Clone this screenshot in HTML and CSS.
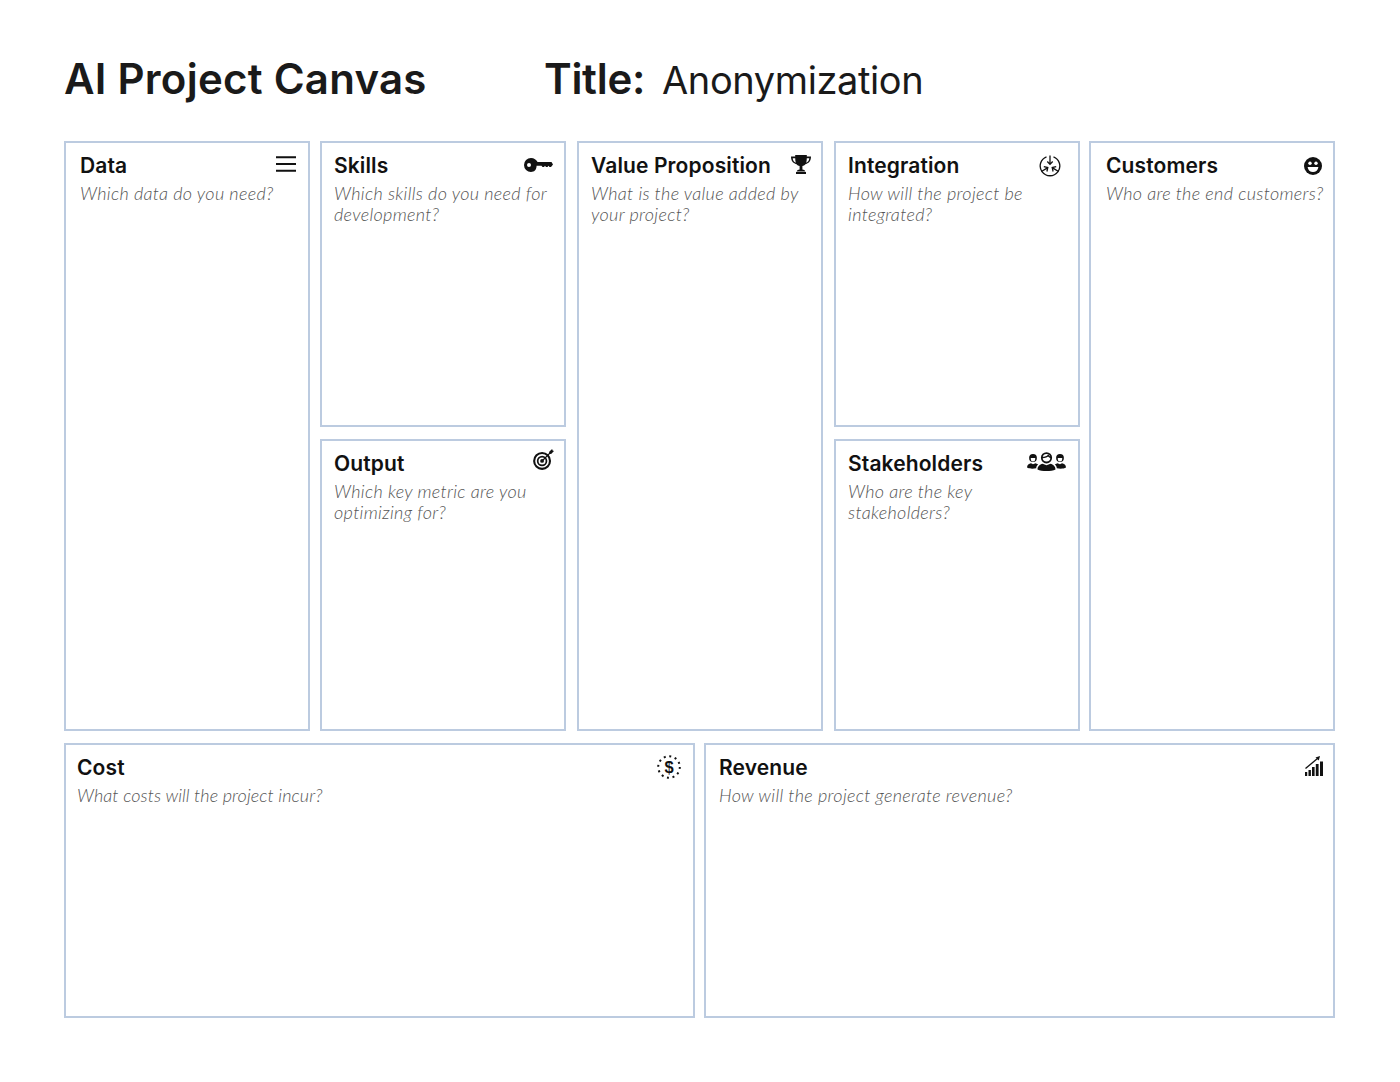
FILE: index.html
```html
<!DOCTYPE html>
<html lang="en">
<head>
<meta charset="utf-8">
<title>AI Project Canvas</title>
<link rel="stylesheet" href="styles.css">
</head>
<body>
<main class="page">
  <header class="header">
    <h1 class="brand">AI Project Canvas</h1>
    <div class="doc-title"><strong>Title:</strong><span>Anonymization</span></div>
  </header>
  <section class="upper">
    <article class="card col-1 pad-15">
      <div class="card-head menu-head"><h2>Data</h2>
        <svg class="icon icon-menu" viewBox="0 0 20 16"><path d="M0 1.200h20M0 8h20M0 14.800h20" stroke="#111" stroke-width="2" fill="none"/></svg>
      </div>
      <p>Which data do you need?</p>
    </article>
    <div class="stack col-2">
      <article class="card skills pad-13">
        <div class="card-head key-head"><h2>Skills</h2>
          <svg class="icon icon-key" viewBox="0 0 29 14"><path fill="#111" fill-rule="evenodd" d="M7 0c3 0 5.500 1.700 6.600 4H27.500L29 6.500l-2 2.500h-1.500l-1-1.200-1 1.200h-1.500l-1-1.200-1 1.200h-1.500l-1-1.200h-4.900C12.500 12.300 10 14 7 14A7 7 0 0 1 7 0zM5 5a2 2 0 1 0 0 4 2 2 0 0 0 0-4z"/></svg>
        </div>
        <p>Which skills do you need for development?</p>
      </article>
      <article class="card output pad-13">
        <div class="card-head"><h2>Output</h2>
          <svg class="icon icon-target" viewBox="0 0 22 22"><g fill="none" stroke="#111"><circle cx="9.500" cy="12.500" r="8.300" stroke-width="2.200"/><circle cx="9.500" cy="12.500" r="4.600" stroke-width="1.800"/></g><circle cx="9.500" cy="12.500" r="2" fill="#111"/><path d="M9.500 12.500 19 3" stroke="#111" stroke-width="1.400"/><path d="M17 3l3-3 .6 1.600L22 2.200l-3 3-2.200-.2z" fill="#111"/></svg>
        </div>
        <p>Which key metric are you optimizing for?</p>
      </article>
    </div>
    <article class="card col-3 pad-13">
      <div class="card-head"><h2>Value Proposition</h2>
        <svg class="icon icon-trophy" viewBox="0 0 20 19"><path fill="#111" d="M4.200 0h11.600v1.600H20c0 4.200-1.700 6.700-5.600 7.600-.9 1-1.800 1.500-3 1.800v3.400c1.300.1 2.600.7 3 2.200H5.600c.4-1.500 1.700-2.100 3-2.200V11c-1.200-.3-2.100-.8-3-1.800C1.700 8.300 0 5.800 0 1.600h4.200zM1.700 3.200c.2 2.300 1.100 3.800 3.100 4.500-.4-1.400-.6-2.900-.6-4.500zm16.600 0h-2.500c0 1.600-.2 3.100-.6 4.500 2-.7 2.900-2.200 3.100-4.500zM5 17h10v2H5z"/></svg>
      </div>
      <p>What is the value added by your project?</p>
    </article>
    <div class="stack col-4">
      <article class="card skills pad-14">
        <div class="card-head integration-head"><h2>Integration</h2>
          <svg class="icon icon-integration" viewBox="0 0 22 22"><g fill="none" stroke="#111" stroke-width="1.300"><path d="M7.500 1.800a9.800 9.800 0 1 0 7 0"/><path d="M11 .5v8.500M8.300 6.500 11 9.400l2.700-2.900"/><path d="M2.500 16.500 8.800 12.600M4.800 11.700l4 .9-.9 3.900"/><path d="M19.500 16.500l-6.300-3.900M17.200 11.700l-4 .9.900 3.900"/></g></svg>
        </div>
        <p>How will the project be integrated?</p>
      </article>
      <article class="card output pad-14">
        <div class="card-head people-head"><h2>Stakeholders</h2>
          <svg class="icon icon-people" viewBox="0 0 39 19"><g fill="#111"><circle cx="6" cy="6" r="3.900"/><path d="M0 15.500c0-2.600 2-3.900 4-4.300l2 1 2.600-1 2.600 1.300c-1.300 1-2 2.300-2 3.800-3.500.6-7 .5-9.200-.8z"/><circle cx="33" cy="6" r="3.900"/><path d="M39 15.500c0-2.600-2-3.900-4-4.300l-2 1-2.600-1-2.600 1.300c1.300 1 2 2.300 2 3.800 3.500.6 7 .5 9.200-.8z"/><path d="M10.500 17.500c0-3.300 2.400-5 5-5.800l4 1.500 4-1.500c2.600.8 5 2.500 5 5.800-2 1.100-5.500 1.500-9 1.500s-7-.4-9-1.500z"/></g><circle cx="19.500" cy="5.800" r="4.700" fill="#fff" stroke="#111" stroke-width="1.800"/><path d="M15 5.500c1.500-.1 5-.4 6.200-2.200.7 1.200 2 2 3 2.200" stroke="#111" stroke-width="1.300" fill="none"/><g fill="#fff"><path d="M3.800 6h4.400v1.200a2.200 2.200 0 0 1-4.400 0zM30.800 6h4.400v1.200a2.200 2.200 0 0 1-4.400 0z"/></g></svg>
        </div>
        <p>Who are the key stakeholders?</p>
      </article>
    </div>
    <article class="card col-5 pad-16">
      <div class="card-head smile-head"><h2>Customers</h2>
        <svg class="icon icon-smile" viewBox="0 0 18 18"><circle cx="9" cy="9" r="9" fill="#111"/><circle cx="6" cy="6.300" r="1.700" fill="#fff"/><circle cx="12" cy="6.300" r="1.700" fill="#fff"/><path d="M3.600 10h10.800c-.3 3-2.500 5-5.400 5s-5.100-2-5.400-5z" fill="#fff"/></svg>
      </div>
      <p class="wide">Who are the end customers?</p>
    </article>
  </section>
  <section class="lower">
    <article class="card cost">
      <div class="card-head cost-head"><h2>Cost</h2>
        <svg class="icon icon-cost" viewBox="0 0 24 24"><circle cx="12" cy="12" r="10.800" fill="none" stroke="#111" stroke-width="2" stroke-dasharray="2 3.650"/><text x="12" y="18" class="dollar">$</text></svg>
      </div>
      <p class="snug">What costs will the project incur?</p>
    </article>
    <article class="card revenue">
      <div class="card-head"><h2>Revenue</h2>
        <svg class="icon icon-revenue" viewBox="0 0 18 20"><path fill="#111" d="M0 16h2.200v4H0zM3.500 14h2.400v6H3.500zM7 11h2.600v9H7zM10.800 8h2.800v12h-2.800zM15 5.500h3V20h-3z"/><path d="M.5 12.500 12.500 2.500" stroke="#111" stroke-width="1.300"/><path d="M10.500 1.500 15 0l-1.200 4.500z" fill="#111"/></svg>
      </div>
      <p>How will the project generate revenue?</p>
    </article>
  </section>
</main>
</body>
</html>
```

FILE: styles.css
```css
* { box-sizing: border-box; }
html, body { margin: 0; background: #fff; }
body { font-family: "Inter", "Liberation Sans", sans-serif; color: #1a1a1a; }
.page { width: 1400px; height: 1082px; padding: 53px 65px 0 64px; }

.header { display: flex; align-items: baseline; height: 88px; }
.brand { margin: 0; width: 480px; font-size: 42px; line-height: 52px; font-weight: 600; letter-spacing: 0.25px; }
.doc-title { display: flex; align-items: baseline; gap: 17px; font-size: 38px; line-height: 51px; }
.doc-title strong { font-weight: 600; font-size: 42px; letter-spacing: -0.3px; }
.doc-title span { font-weight: 400; letter-spacing: -0.4px; }

.upper { display: flex; height: 590px; }
.col-1, .stack, .col-3, .col-5 { width: 246px; flex: none; }
.col-2 { margin-left: 10px; }
.col-3 { margin-left: 11px; }
.col-4 { margin-left: 11px; }
.col-5 { margin-left: 9px; }
.stack { display: flex; flex-direction: column; gap: 12px; }
.skills { height: 286px; }
.output { flex: 1; }

.card { border: 2px solid #bccbe0; padding: 9px 10px 0 14px; }
.pad-13 { padding-left: 12px; }
.pad-14 { padding-left: 12px; }
.pad-15 { padding-left: 14px; }
.pad-16 { padding-left: 15px; }

.card-head { display: flex; justify-content: space-between; align-items: flex-start; height: 31px; }
.card h2 { margin: 0; font-size: 21px; line-height: 28px; font-weight: 600; letter-spacing: 0.12px; color: #111; white-space: nowrap; }
.card p { margin: 0; font-family: "Lato", "Liberation Sans", sans-serif; font-size: 18px; line-height: 21px; font-style: italic; font-weight: 300; letter-spacing: 0.32px; color: #555; font-variant-ligatures: none; }
.card p.wide { margin-right: -8px; }
.card p.snug { letter-spacing: 0.07px; }

.menu-head { padding-right: 2px; }
.cost-head { padding-right: 2px; }
.key-head { padding-right: 1px; }
.smile-head { padding-right: 1px; }
.integration-head { padding-right: 7px; }
.people-head { padding-right: 2px; }

.icon { display: block; flex: none; }
.icon-menu { width: 20px; height: 16px; margin-top: 4px; }
.icon-key { width: 29px; height: 14px; margin-top: 6px; }
.icon-target { width: 21px; height: 21px; margin-top: -1px; }
.icon-trophy { width: 20px; height: 19px; margin-top: 3px; }
.icon-integration { width: 22px; height: 22px; margin-top: 3px; }
.icon-people { width: 39px; height: 19px; margin-top: 2px; }
.icon-smile { width: 18px; height: 18px; margin-top: 5px; }
.icon-cost { width: 24px; height: 24px; margin-top: 1px; }
.icon-revenue { width: 18px; height: 20px; margin-top: 2px; }
.dollar { font: 700 16.5px "Liberation Sans", sans-serif; text-anchor: middle; fill: #111; }

.lower { display: flex; gap: 9px; height: 275px; margin-top: 12px; }
.cost { width: 631px; padding-left: 11px; }
.revenue { width: 631px; padding-left: 13px; }
```
